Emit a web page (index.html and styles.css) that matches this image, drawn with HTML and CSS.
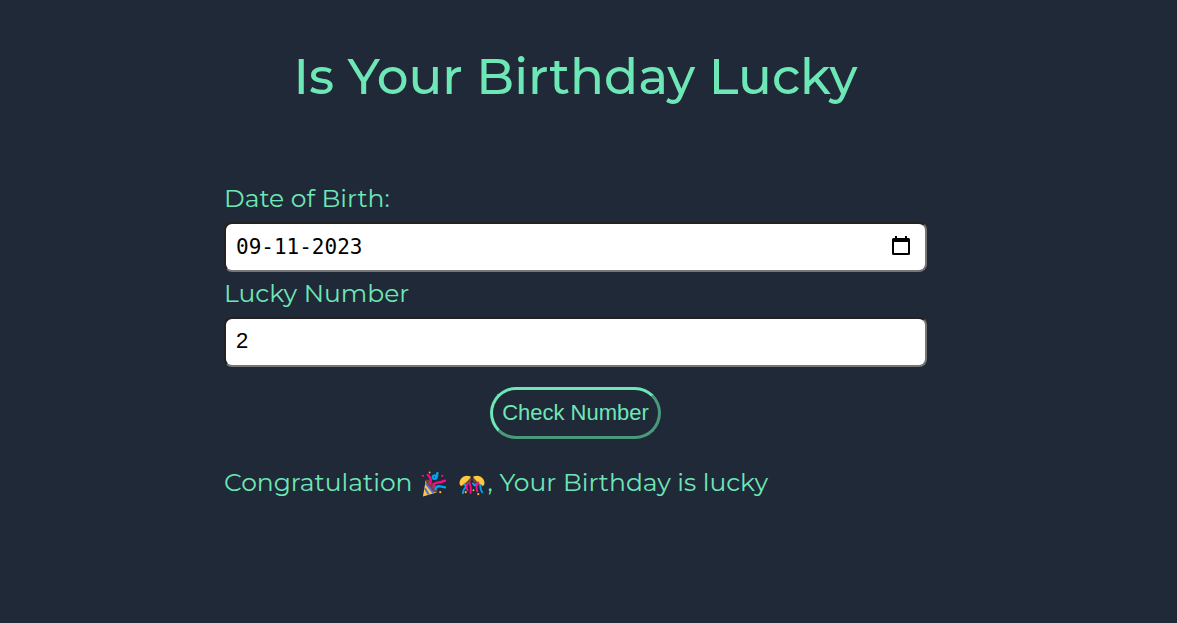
FILE: index.html
```html
<!DOCTYPE html>
<html lang="en">
<head>
<meta charset="utf-8">
<meta name="viewport" content="width=device-width, initial-scale=1">
<title>Is Your Birthday Lucky</title>
<link rel="stylesheet" href="styles.css">
</head>
<body>
<main class="page">
  <h1 class="title">Is Your Birthday Lucky</h1>
  <form class="form">
    <label class="label" for="dob">Date of Birth:</label>
    <div class="date-field">
      <input class="field field-date" id="dob" type="text" inputmode="numeric" value="09-11-2023">
      <button class="picker" type="button" aria-label="Open calendar">
        <svg class="picker-icon" viewBox="0 0 18 20" aria-hidden="true">
          <path fill="#000" fill-rule="evenodd" d="M3 0h2v2h8V0h2v2h1.500a1.500 1.500 0 0 1 1.500 1.500v14a1.500 1.500 0 0 1-1.500 1.500h-15A1.500 1.500 0 0 1 0 17.500v-14A1.500 1.500 0 0 1 1.500 2H3zM2 6v11h14V6z"/>
        </svg>
      </button>
    </div>
    <label class="label" for="lucky">Lucky Number</label>
    <input class="field" id="lucky" type="text" inputmode="numeric" value="2">
    <button class="check" type="button">Check Number</button>
    <output class="result" for="dob lucky">Congratulation
      <svg class="emoji" viewBox="0 0 27 27" role="img" aria-label="Party popper">
        <path fill="#6d4534" d="M5 9q3-1 8 4t4 9q-3 1-8-4T5 9z"/>
        <path fill="#ffc83d" d="M5 9q0 4 4 9t8 4L2 26.500z"/>
        <path fill="none" stroke="#4f6bed" stroke-width="2" d="m5 13 8 10M4 18l4 6.500"/>
        <g fill="none" stroke-width="2.400" stroke-linecap="round">
          <path stroke="#f70a8d" d="M7 4q5 4 2 9M13 17q0-5 4-5t8-2"/>
          <path stroke="#00a6ed" d="M17 2q0 7-4 6-2-3 1-3.500 3 0 1 3.500M15 19q1-4 5-3l5 1"/>
        </g>
        <g fill="#ffb02e"><circle cx="9" cy="1.500" r="1"/><circle cx="20" cy="22" r="1.200"/></g>
        <circle cx="2" cy="5" r="1.200" fill="#f70a8d"/><circle cx="22" cy="5" r="1.200" fill="#f70a8d"/>
      </svg>
      <svg class="emoji" viewBox="0 0 27 27" role="img" aria-label="Confetti ball">
        <path fill="#6d4534" d="M12 6.500q3 3-2 6.500t-8 2.500q0-4 4-6.500t6-2.500zM15 6.500q-3 3 2 6.500t8 2.500q0-4-4-6.500t-6-2.500z"/>
        <path fill="#ffc83d" d="M12.500 6Q6 3 2 8-1 13 2 15.500L6 13q4-3 6.500-7zM14.500 6Q21 3 25 8q3 5 0 7.500L21 13q-4-3-6.500-7z"/>
        <g fill="none" stroke-width="2" stroke-linecap="round">
          <path stroke="#00a6ed" d="M6 14q2 2 0 4t-2 5M14.500 13l2 2 3-2"/>
          <path stroke="#f70a8d" d="M9 13q-2 4 0 7M11 12q2 5 1 11M20 12q-3 5-1 9"/>
          <path stroke="#00a6ed" d="M22 15q0 4 2 7"/>
        </g>
        <g fill="#ffb02e"><circle cx="7" cy="22" r="1.200"/><circle cx="15" cy="20" r="1"/><circle cx="20" cy="24" r="1.200"/></g>
      </svg>, Your Birthday is lucky</output>
  </form>
</main>
</body>
</html>
```
FILE: styles.css
```css
* {
  box-sizing: border-box;
}

body {
  margin: 0;
  background: #1f2937;
  color: #6ee7b7;
  font-family: Montserrat, Inter, sans-serif;
}

.page {
  display: flex;
  flex-direction: column;
  align-items: center;
  padding: 45px 26px 24px 0;
}

.title {
  margin: 0 0 72px;
  font-size: 50px;
  line-height: 64px;
  font-weight: 500;
  text-align: center;
}

.form {
  display: flex;
  flex-direction: column;
  width: 100%;
  max-width: 703px;
}

.label {
  font-size: 25px;
  line-height: 35px;
}

.field {
  width: 100%;
  height: 50px;
  margin: 6px 0 4px;
  padding: 0 10px 2px;
  border: 2px solid;
  border-color: #222 #767676 #767676 #222;
  border-radius: 8px;
  background: #fff;
  color: #000;
  font-family: "Liberation Sans", Arial, sans-serif;
  font-size: 22px;
}

.field-date {
  padding-bottom: 0;
  font-family: Consolas, "DejaVu Sans Mono", monospace;
  font-size: 21px;
}

.date-field {
  position: relative;
}

.picker {
  position: absolute;
  right: 17px;
  top: 20px;
  display: flex;
  padding: 0;
  border: 0;
  background: none;
}

.picker-icon {
  width: 18px;
  height: 20px;
}

.check {
  align-self: center;
  height: 52px;
  margin: 16px 0 25px;
  padding: 0 9px;
  border: 3px solid;
  border-color: #6ee7b7 #499a7a #499a7a #6ee7b7;
  border-radius: 26px;
  background: transparent;
  color: #6ee7b7;
  font-family: "Liberation Sans", Arial, sans-serif;
  font-size: 22px;
}

.result {
  font-size: 25px;
  line-height: 36px;
}

.emoji {
  width: 26px;
  height: 26px;
  margin: 0 3px 0 2px;
  vertical-align: -6px;
}
```
